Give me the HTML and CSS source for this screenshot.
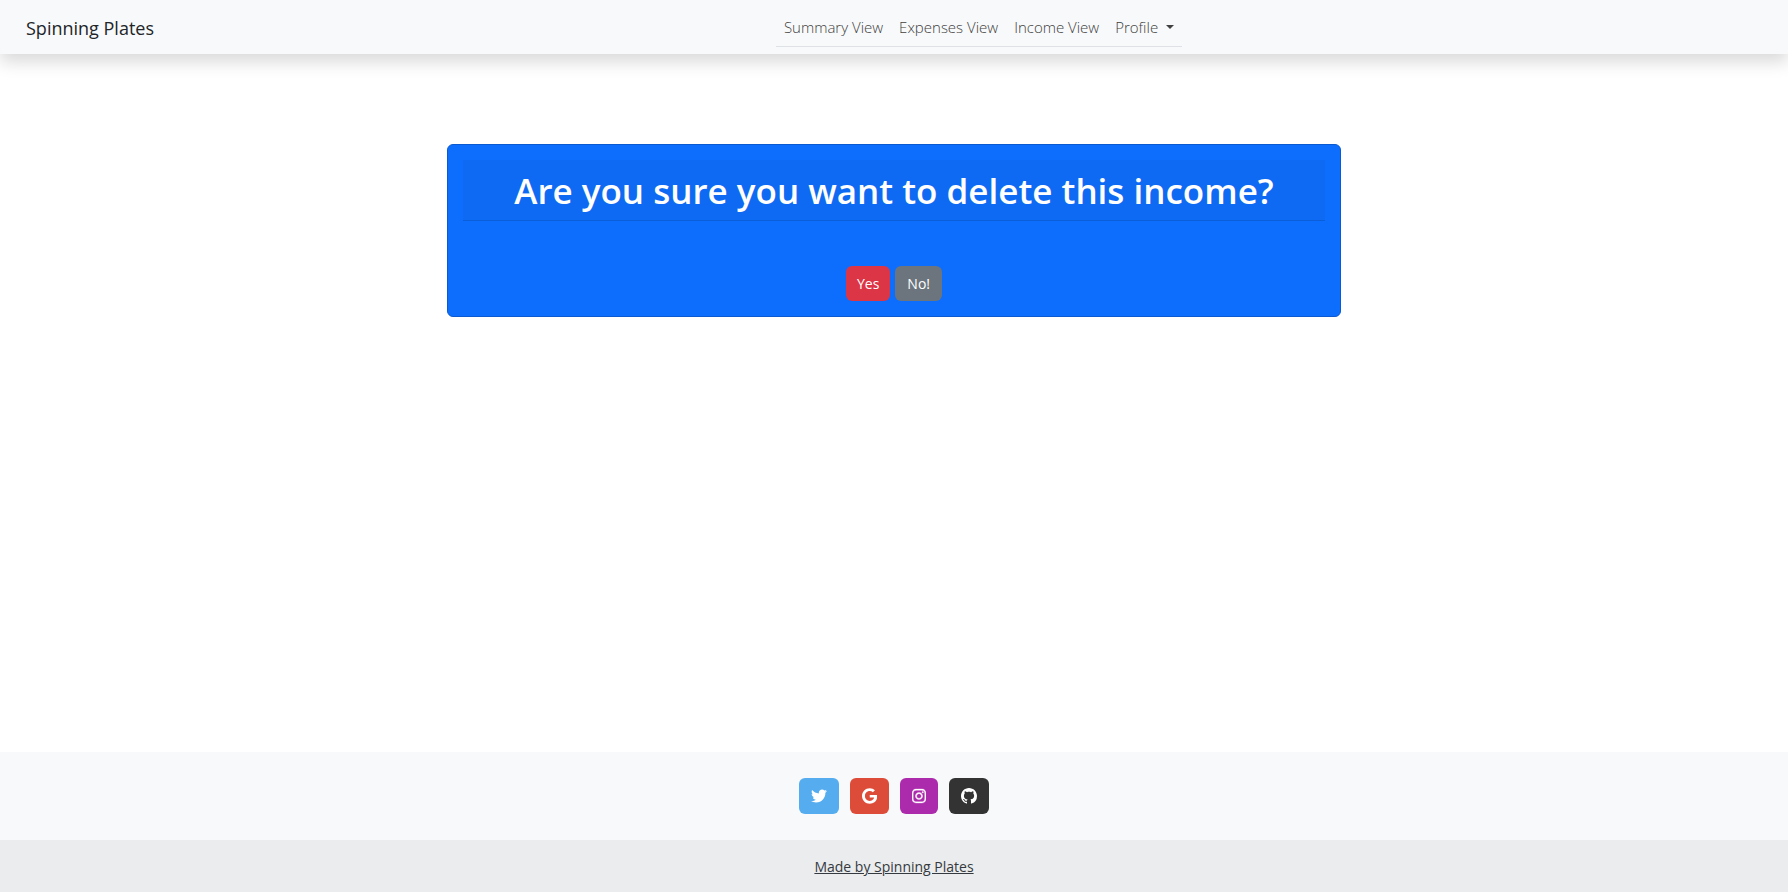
FILE: index.html
```html
<!DOCTYPE html>
<html lang="en">
<head>
<meta charset="utf-8">
<meta name="viewport" content="width=device-width, initial-scale=1">
<title>Spinning Plates</title>
<link rel="stylesheet" href="styles.css">
</head>
<body>
<header class="navbar">
  <a class="brand" href="#">Spinning Plates</a>
  <nav class="nav-area">
    <ul class="nav-list">
      <li><a class="nav-link" href="#">Summary View</a></li>
      <li><a class="nav-link" href="#">Expenses View</a></li>
      <li><a class="nav-link" href="#">Income View</a></li>
      <li><button class="nav-link dropdown" type="button" aria-haspopup="true">Profile</button></li>
    </ul>
  </nav>
</header>
<main class="content">
  <section class="card">
    <h1 class="card-header">Are you sure you want to delete this income?</h1>
    <form class="actions">
      <button class="btn btn-danger" type="submit">Yes</button>
      <a class="btn btn-secondary" href="#">No!</a>
    </form>
  </section>
</main>
<footer class="footer">
  <div class="social">
    <a class="social-btn twitter" href="#" aria-label="Twitter"><svg class="icon" viewBox="0 0 512 512"><path d="M459.37 151.716c.325 4.548.325 9.097.325 13.645 0 138.72-105.583 298.558-298.558 298.558-59.452 0-114.68-17.219-161.137-47.106 8.447.974 16.568 1.299 25.34 1.299 49.055 0 94.213-16.568 130.274-44.832-46.132-.975-84.792-31.188-98.112-72.772 6.498.974 12.995 1.624 19.818 1.624 9.421 0 18.843-1.3 27.614-3.573-48.081-9.747-84.143-51.98-84.143-102.985v-1.299c13.969 7.797 30.214 12.67 47.431 13.319-28.264-18.843-46.781-51.005-46.781-87.391 0-19.492 5.197-37.36 14.294-52.954 51.655 63.675 129.3 105.258 216.365 109.807-1.624-7.797-2.599-15.918-2.599-24.04 0-57.828 46.782-104.934 104.934-104.934 30.213 0 57.502 12.67 76.67 33.137 23.715-4.548 46.456-13.32 66.599-25.34-7.798 24.366-24.366 44.833-46.132 57.827 21.117-2.273 41.584-8.122 60.426-16.243-14.292 20.791-32.161 39.308-52.628 54.253z"/></svg></a>
    <a class="social-btn google" href="#" aria-label="Google"><svg class="icon" viewBox="0 0 488 512"><path d="M488 261.8C488 403.3 391.1 504 248 504 110.8 504 0 393.2 0 256S110.8 8 248 8c66.8 0 123 24.5 166.3 64.9l-67.5 64.9C258.5 52.6 94.3 116.6 94.3 256c0 86.5 69.1 156.6 153.7 156.6 98.2 0 135-70.4 140.8-106.9H248v-85.3h236.1c2.3 12.7 3.9 24.9 3.9 41.4z"/></svg></a>
    <a class="social-btn instagram" href="#" aria-label="Instagram"><svg class="icon icon-outlined" viewBox="0 0 448 512"><path d="M224.1 141c-63.6 0-114.9 51.3-114.9 114.9s51.3 114.9 114.9 114.9S339 319.5 339 255.9 287.7 141 224.1 141zm0 189.6c-41.1 0-74.7-33.5-74.7-74.7s33.5-74.7 74.7-74.7 74.7 33.5 74.7 74.7-33.6 74.7-74.7 74.7zm146.4-194.3c0 14.9-12 26.8-26.8 26.8-14.9 0-26.8-12-26.8-26.8s12-26.8 26.8-26.8 26.8 12 26.8 26.8zm76.1 27.2c-1.7-35.9-9.9-67.7-36.2-93.9-26.2-26.2-58-34.4-93.9-36.2-37-2.1-147.9-2.1-184.9 0-35.8 1.7-67.6 9.9-93.9 36.1s-34.4 58-36.2 93.9c-2.1 37-2.1 147.9 0 184.9 1.7 35.9 9.9 67.7 36.2 93.9s58 34.4 93.9 36.2c37 2.1 147.9 2.1 184.9 0 35.9-1.7 67.7-9.9 93.9-36.2 26.2-26.2 34.4-58 36.2-93.9 2.1-37 2.1-147.8 0-184.8zM398.8 388c-7.8 19.6-22.9 34.7-42.6 42.6-29.5 11.7-99.5 9-132.1 9s-102.7 2.6-132.1-9c-19.6-7.8-34.7-22.9-42.6-42.6-11.7-29.5-9-99.5-9-132.1s-2.6-102.7 9-132.1c7.8-19.6 22.9-34.7 42.6-42.6 29.5-11.7 99.5-9 132.1-9s102.7-2.6 132.1 9c19.6 7.8 34.7 22.9 42.6 42.6 11.7 29.5 9 99.5 9 132.1s2.7 102.7-9 132.1z"/></svg></a>
    <a class="social-btn github" href="#" aria-label="GitHub"><svg class="icon" viewBox="0 0 16 16"><path d="M8 0C3.58 0 0 3.58 0 8c0 3.54 2.29 6.53 5.47 7.59.4.07.55-.17.55-.38 0-.19-.01-.82-.01-1.49-2.01.37-2.53-.49-2.69-.94-.09-.23-.48-.94-.82-1.13-.28-.15-.68-.52-.01-.53.63-.01 1.08.58 1.23.82.72 1.21 1.87.87 2.33.66.07-.52.28-.87.51-1.07-1.78-.2-3.64-.89-3.64-3.95 0-.87.31-1.59.82-2.15-.08-.2-.36-1.02.08-2.12 0 0 .67-.21 2.2.82.64-.18 1.32-.27 2-.27s1.36.09 2 .27c1.53-1.04 2.2-.82 2.2-.82.44 1.1.16 1.92.08 2.12.51.56.82 1.27.82 2.15 0 3.07-1.87 3.75-3.65 3.95.29.25.54.73.54 1.48 0 1.07-.01 1.93-.01 2.2 0 .21.15.46.55.38A8.01 8.01 0 0 0 16 8c0-4.42-3.58-8-8-8z"/></svg></a>
  </div>
  <div class="credit"><a class="credit-link" href="#">Made by Spinning Plates</a></div>
</footer>
</body>
</html>
```
FILE: styles.css
```css
* {
  box-sizing: border-box;
}

body {
  margin: 0;
  min-height: 100vh;
  display: flex;
  flex-direction: column;
  background: #fff;
  color: #212529;
  font-family: "Segoe UI", "Open Sans", "Noto Sans", sans-serif;
  font-size: 14px;
  line-height: 24px;
}

.navbar {
  display: flex;
  align-items: center;
  gap: 16px;
  min-height: 54px;
  padding: 0 0 0 26px;
  background: #f8f9fa;
  box-shadow: 0 8px 16px rgba(0, 0, 0, 0.15);
}

.brand {
  padding-top: 2px;
  color: #212529;
  font-size: 18px;
  text-decoration: none;
}

.nav-area {
  flex: 1;
  display: flex;
  justify-content: center;
}

.nav-list {
  display: flex;
  margin: 0;
  padding: 0;
  list-style: none;
  border-bottom: 1px solid #dee2e6;
}

.nav-link {
  display: block;
  padding: 8px;
  border: 0;
  background: none;
  color: #404040;
  font: inherit;
  font-size: 15px;
  font-weight: 300;
  line-height: 22px;
  text-decoration: none;
}

.dropdown {
  display: flex;
  align-items: center;
  gap: 8px;
}

.dropdown::after {
  content: "";
  border: 4px solid transparent;
  border-top-color: #404040;
  border-bottom: 0;
}

.content {
  flex: 1;
  padding: 90px 0 48px;
}

.card {
  width: 50%;
  min-width: 320px;
  margin: 0 auto;
  padding: 15px;
  border: 1px solid #0b5acf;
  border-radius: 6px;
  background: #0d6efd;
  text-align: center;
}

.card-header {
  margin: 0 0 45px;
  padding: 7px 16px 5px;
  border-bottom: 1px solid #0b5ed7;
  background: #0f6af3;
  color: #fff;
  font-size: 35px;
  font-weight: 600;
  line-height: 48px;
}

.actions {
  display: flex;
  justify-content: center;
  gap: 5px;
}

.btn {
  padding: 6px 11px 5px;
  border: 0;
  border-radius: 6px;
  color: #fff;
  font: inherit;
  text-decoration: none;
}

.btn-danger {
  background: #dc3545;
}

.btn-secondary {
  padding: 6px 12px 5px;
  background: #6c757d;
}

.footer {
  background: #f8f9fa;
  text-align: center;
}

.social {
  display: flex;
  justify-content: center;
  gap: 11px;
  padding: 26px 16px;
}

.social-btn {
  display: flex;
  align-items: center;
  padding: 10px 12px;
  border-radius: 6px;
}

.icon {
  display: block;
  height: 16px;
  fill: #fff;
}

.icon-outlined {
  stroke: #fff;
  stroke-width: 10;
}

.twitter {
  background: #55acee;
}

.google {
  background: #dd4b39;
}

.instagram {
  background: #ac2bac;
}

.github {
  background: #333;
}

.credit {
  padding: 15px 16px 13px;
  background: #ebeced;
}

.credit-link {
  color: #343a40;
}
```
